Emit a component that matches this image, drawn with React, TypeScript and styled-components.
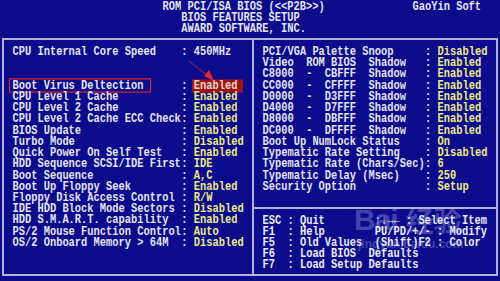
import styled, { createGlobalStyle } from "styled-components"

const CW = 6.25
const RH = 11.24

const GlobalStyle = createGlobalStyle`
  html, body {
    margin: 0;
    padding: 0;
    background: #0b0b8c;
  }
  body {
    width: 500px;
    height: 281px;
    overflow: hidden;
  }
`

const Screen = styled.div`
  position: relative;
  width: 500px;
  height: 281px;
  background: #0b0b8c;
  font-family: "Liberation Mono", "DejaVu Sans Mono", monospace;
  font-size: 10.4px;
  font-weight: bold;
  color: #e4e4ee;
  overflow: hidden;
`

const Line = styled.div<{ $indent?: number }>`
  display: flex;
  height: ${RH}px;
  line-height: ${RH}px;
  white-space: pre;
  padding-left: ${p => (p.$indent ?? 0) * CW}px;
  transform: translateY(1.6px) scaleY(1.2);
`

const Cell = styled.span<{ $w?: number }>`
  flex: none;
  width: ${p => (p.$w ? `${p.$w * CW}px` : "auto")};
`

const Label = styled(Cell)<{ $marked?: boolean }>`
  position: relative;
  ${p => p.$marked && `
    &::after {
      content: "";
      position: absolute;
      left: -4px;
      top: -1.5px;
      width: 140px;
      height: 10px;
      border: 1.5px solid #e2232b;
    }
  `}
`

const Value = styled.span<{ $fixed?: boolean; $marked?: boolean }>`
  color: ${p => (p.$fixed ? "#e4e4ee" : "#f0ea86")};
  ${p => p.$marked && `
    background: #9c1518;
    color: #f4d6c4;
    margin-left: -2px;
    padding: 0 6px 0 2px;
  `}
`

const Frame = styled.div`
  display: flex;
  margin: 4.6px 2px 0;
  border: 2px solid #b2b2d8;
`

const LeftPanel = styled.div`
  width: 248px;
  padding: 4.66px 0 4px 8.5px;
  box-sizing: border-box;
`

const RightPanel = styled.div`
  flex: 1;
  display: flex;
  flex-direction: column;
  border-left: 2px solid #b2b2d8;
`

const Settings = styled.div`
  padding: 4.66px 0 4.7px 8.5px;
  border-bottom: 2px solid #b2b2d8;
`

const Help = styled.div`
  padding: 4.6px 0 0 8.5px;
  color: #ececf4;
`

const Annotation = styled.svg`
  position: absolute;
  left: 0;
  top: 0;
  pointer-events: none;
`

const Watermark = styled.div`
  position: absolute;
  left: 354px;
  top: 205px;
  width: 140px;
  color: rgba(215, 220, 255, 0.28);
  font-family: "Liberation Sans", Arial, sans-serif;
  font-weight: bold;
  pointer-events: none;
`

const MarkTop = styled.div`
  display: flex;
  align-items: flex-end;
  gap: 2px;
`

const MarkLatin = styled.span`
  font-size: 30px;
  line-height: 30px;
  letter-spacing: -1px;
`

const MarkCjk = styled.span`
  font-family: "Noto Sans CJK SC", sans-serif;
  font-size: 28px;
  line-height: 30px;
  margin-left: 6px;
`

const MarkUrl = styled.div`
  font-size: 12px;
  line-height: 12px;
  margin: 3px 0 0 4px;
`

type Row = { label: string; value?: string; fixed?: boolean; marked?: boolean }

const leftRows: Row[] = [
  { label: "CPU Internal Core Speed", value: "450MHz", fixed: true },
  { label: "" },
  { label: "" },
  { label: "Boot Virus Deltection", value: "Enabled", marked: true },
  { label: "CPU Level 1 Cache", value: "Enabled" },
  { label: "CPU Level 2 Cache", value: "Enabled" },
  { label: "CPU Level 2 Cache ECC Check", value: "Enabled" },
  { label: "BIOS Update", value: "Enabled" },
  { label: "Turbo Mode", value: "Disabled" },
  { label: "Quick Power On Self Test", value: "Enabled" },
  { label: "HDD Sequence SCSI/IDE First", value: "IDE" },
  { label: "Boot Sequence", value: "A,C" },
  { label: "Boot Up Floppy Seek", value: "Enabled" },
  { label: "Floppy Disk Access Control", value: "R/W" },
  { label: "IDE HDD Block Mode Sectors", value: "Disabled" },
  { label: "HDD S.M.A.R.T. capability", value: "Enabled" },
  { label: "PS/2 Mouse Function Control", value: "Auto" },
  { label: "OS/2 Onboard Memory > 64M", value: "Disabled" },
  { label: "" },
  { label: "" },
]

const rightRows: Row[] = [
  { label: "PCI/VGA Palette Snoop", value: "Disabled" },
  { label: "Video  ROM BIOS  Shadow", value: "Enabled" },
  { label: "C8000  -  CBFFF  Shadow", value: "Enabled" },
  { label: "CC000  -  CFFFF  Shadow", value: "Enabled" },
  { label: "D0000  -  D3FFF  Shadow", value: "Enabled" },
  { label: "D4000  -  D7FFF  Shadow", value: "Enabled" },
  { label: "D8000  -  DBFFF  Shadow", value: "Enabled" },
  { label: "DC000  -  DFFFF  Shadow", value: "Enabled" },
  { label: "Boot Up NumLock Status", value: "On" },
  { label: "Typematic Rate Setting", value: "Disabled" },
  { label: "Typematic Rate (Chars/Sec)", value: "6" },
  { label: "Typematic Delay (Msec)", value: "250" },
  { label: "Security Option", value: "Setup" },
  { label: "" },
]

const helpRows = [
  "ESC : Quit        \u2191\u2193\u2192\u2190 : Select Item",
  "F1  : Help        PU/PD/+/- : Modify",
  "F5  : Old Values  (Shift)F2 : Color",
  "F6  : Load BIOS  Defaults",
  "F7  : Load Setup Defaults",
]

const SettingRow = ({ row, width }: { row: Row; width: number }) => (
  <Line>
    <Label $w={width} $marked={row.marked}>{row.label}</Label>
    {row.value !== undefined && <Cell $w={2}>: </Cell>}
    {row.value !== undefined && (
      <Value $fixed={row.fixed} $marked={row.marked}>{row.value}</Value>
    )}
  </Line>
)

export default function App() {
  return (
    <Screen>
      <GlobalStyle />
      <Line $indent={26}>
        <Cell $w={40}>ROM PCI/ISA BIOS (&lt;&lt;P2B&gt;&gt;)</Cell>
        <Cell>GaoYin Soft</Cell>
      </Line>
      <Line $indent={29}>BIOS FEATURES SETUP</Line>
      <Line $indent={29}>AWARD SOFTWARE, INC.</Line>
      <Frame>
        <LeftPanel>
          {leftRows.map((row, i) => (
            <SettingRow key={i} row={row} width={27} />
          ))}
        </LeftPanel>
        <RightPanel>
          <Settings>
            {rightRows.map((row, i) => (
              <SettingRow key={i} row={row} width={26} />
            ))}
          </Settings>
          <Help>
            {helpRows.map((text, i) => (
              <Line key={i}>{text}</Line>
            ))}
          </Help>
        </RightPanel>
      </Frame>
      <Annotation width="500" height="281" viewBox="0 0 500 281">
        <line x1="189" y1="61" x2="208" y2="76" stroke="#d8262c" strokeWidth="0.8" />
        <polygon points="214,81 204,76 209,70" fill="#e0262c" />
      </Annotation>
      <Watermark>
        <MarkTop>
          <MarkLatin>Bai</MarkLatin>
          <MarkCjk>经验</MarkCjk>
        </MarkTop>
        <MarkUrl>jingyan.baidu.com</MarkUrl>
      </Watermark>
    </Screen>
  )
}
